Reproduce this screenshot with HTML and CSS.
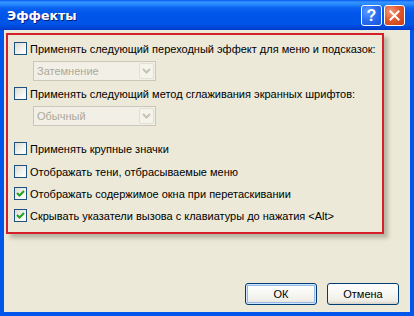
FILE: index.html
```html
<!DOCTYPE html>
<html lang="ru">
<head>
<meta charset="utf-8">
<title>Эффекты</title>
<link rel="stylesheet" href="styles.css">
</head>
<body>
<div class="window">
  <div class="titlebar">
    <span class="title">Эффекты</span>
    <div class="tbtns">
      <span class="tbtn help">?</span>
      <span class="tbtn close"><svg width="11" height="11" viewBox="0 0 11 11"><path d="M1.5 1.5 L9.5 9.5 M9.5 1.5 L1.5 9.5" stroke="#fff" stroke-width="2" stroke-linecap="square"/></svg></span>
    </div>
  </div>
  <div class="body">
    <div class="panel">
      <label class="row r1"><span class="cb"></span><span>Применять следующий переходный эффект для меню и подсказок:</span></label>
      <div class="combo c1"><span class="ctext">Затемнение</span><span class="cbtn"><svg width="9" height="6" viewBox="0 0 9 6"><path d="M1 1 L4.5 4.5 L8 1" fill="none" stroke="#c6c3b4" stroke-width="2"/></svg></span></div>
      <label class="row r2"><span class="cb"></span><span>Применять следующий метод сглаживания экранных шрифтов:</span></label>
      <div class="combo c2"><span class="ctext">Обычный</span><span class="cbtn"><svg width="9" height="6" viewBox="0 0 9 6"><path d="M1 1 L4.5 4.5 L8 1" fill="none" stroke="#c6c3b4" stroke-width="2"/></svg></span></div>
      <label class="row r3"><span class="cb"></span><span>Применять крупные значки</span></label>
      <label class="row r4"><span class="cb"></span><span>Отображать тени, отбрасываемые меню</span></label>
      <label class="row r5"><span class="cb checked"><svg width="9" height="9" viewBox="0 0 9 9"><path d="M1 4 L3.5 6.5 L8 2" fill="none" stroke="#21a121" stroke-width="2"/></svg></span><span>Отображать содержимое окна при перетаскивании</span></label>
      <label class="row r6"><span class="cb checked"><svg width="9" height="9" viewBox="0 0 9 9"><path d="M1 4 L3.5 6.5 L8 2" fill="none" stroke="#21a121" stroke-width="2"/></svg></span><span>Скрывать указатели вызова с клавиатуры до нажатия &lt;Alt&gt;</span></label>
    </div>
    <div class="buttons">
      <button class="btn default">ОК</button>
      <button class="btn">Отмена</button>
    </div>
  </div>
</div>
</body>
</html>
```

FILE: styles.css
```css
html, body {
  margin: 0;
  padding: 0;
  width: 414px;
  height: 316px;
  overflow: hidden;
  background: #0a3fd8;
}
.window {
  width: 414px;
  height: 316px;
  display: flex;
  flex-direction: column;
  background: #0055ea;
  font-family: "DejaVu Sans", sans-serif;
}
.titlebar {
  height: 30px;
  flex: none;
  display: flex;
  align-items: center;
  justify-content: space-between;
  padding: 0 9px 0 7px;
  background: linear-gradient(to bottom, #0058ee 0px, #3a93ff 2px, #288eff 4px, #0b62f0 8px, #0055ea 14px, #0055e8 24px, #0043d6 28px, #0038c8 30px);
}
.title {
  color: #fff;
  font-family: "DejaVu Sans", sans-serif;
  font-weight: bold;
  font-size: 12.5px;
  text-shadow: 1px 1px 0 #0a1e78;
  letter-spacing: 0px;
}
.tbtns {
  display: flex;
  gap: 2px;
  margin-top: 1px;
}
.tbtn {
  width: 19px;
  height: 19px;
  border: 1px solid #fff;
  border-radius: 3px;
  display: flex;
  align-items: center;
  justify-content: center;
  color: #fff;
  font-family: "Liberation Sans", sans-serif;
  font-weight: bold;
  font-size: 16px;
}
.help {
  background: radial-gradient(circle at 30% 30%, #5c9cff 0%, #2b6ff2 45%, #1653d9 100%);
}
.close {
  background: radial-gradient(circle at 30% 30%, #f09a7a 0%, #e25a30 45%, #c63a14 100%);
}
.body {
  flex: 1;
  margin: 0 4px 4px 4px;
  background: #ece9d8;
  display: flex;
  flex-direction: column;
}
.panel {
  margin: 3px 26px 0 2px;
  border: 2px solid #d5202a;
  box-shadow: 4px 4px 4px rgba(120, 115, 95, 0.45);
  padding: 7px 0 10px 6px;
  display: flex;
  flex-direction: column;
  font-family: "Liberation Sans", sans-serif;
  font-size: 11px;
  color: #000;
}
.row {
  display: flex;
  align-items: center;
  height: 13px;
  gap: 3px;
  white-space: nowrap;
}
.cb {
  width: 11px;
  height: 11px;
  border: 1px solid #1c5180;
  background: linear-gradient(135deg, #dcdcd5 0%, #f4f4f0 60%, #ffffff 100%);
  flex: none;
  display: flex;
  align-items: center;
  justify-content: center;
}
.combo {
  margin-left: 19px;
  width: 117px;
  height: 18px;
  border: 1px solid #c9c7ba;
  background: #f2f0e6;
  display: flex;
  align-items: center;
  justify-content: space-between;
  padding: 0 1px 0 3px;
  color: #aca899;
}
.ctext { font-size: 11px; }
.cbtn {
  width: 15px;
  height: 16px;
  background: #f5f4ea;
  border: 1px solid #e2e0d4;
  border-radius: 2px;
  box-sizing: border-box;
  display: flex;
  align-items: center;
  justify-content: center;
}
.c1 { margin-top: 6px; }
.r2 { margin-top: 6px; }
.c2 { margin-top: 6px; }
.r3 { margin-top: 16px; }
.r4 { margin-top: 10px; }
.r5 { margin-top: 9px; }
.r6 { margin-top: 9px; }
.buttons {
  margin-top: auto;
  margin-bottom: 7px;
  margin-right: 11px;
  display: flex;
  justify-content: flex-end;
  gap: 10px;
}
.btn {
  width: 72px;
  height: 22px;
  border: 1px solid #003c74;
  border-radius: 3px;
  background: linear-gradient(to bottom, #ffffff 0%, #f7f7f3 50%, #eeede5 85%, #d6d0c5 100%);
  font-family: "Liberation Sans", sans-serif;
  font-size: 11px;
  color: #000;
  padding: 0;
}
.default {
  box-shadow: inset 0 0 0 1px #cee7ff, inset 0 0 0 2px #98b8ea;
}
```
